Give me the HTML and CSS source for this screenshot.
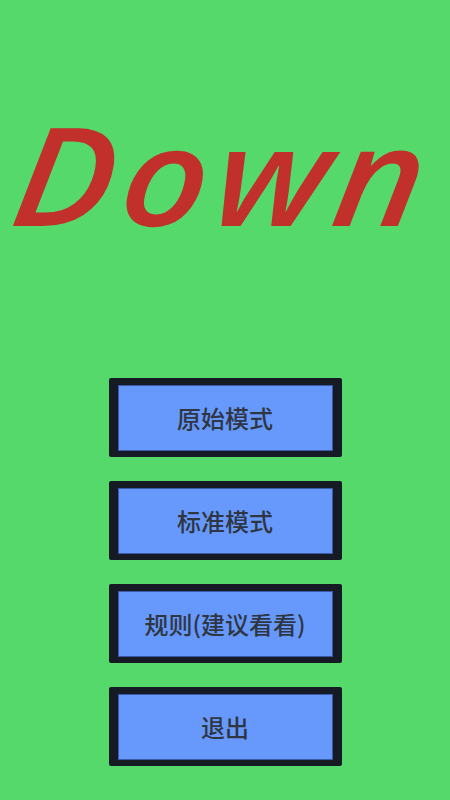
FILE: index.html
```html
<!DOCTYPE html>
<html>
<head>
<meta charset="utf-8">
<link rel="stylesheet" href="styles.css">
</head>
<body>
<div class="screen">
  <h1 class="title">Down</h1>
  <div class="menu">
    <div class="btn"><div class="btn-inner">原始模式</div></div>
    <div class="btn"><div class="btn-inner">标准模式</div></div>
    <div class="btn"><div class="btn-inner">规则(建议看看)</div></div>
    <div class="btn"><div class="btn-inner">退出</div></div>
  </div>
</div>
</body>
</html>
```
FILE: styles.css
```css
html, body {
  margin: 0;
  padding: 0;
}
body {
  width: 450px;
  height: 800px;
  background: #55d96b;
  overflow: hidden;
}
.screen {
  display: flex;
  flex-direction: column;
  align-items: center;
}
.title {
  margin: 88px 0 0 0;
  font-family: "Open Sans", sans-serif;
  font-style: italic;
  font-weight: 600;
  font-size: 137px;
  line-height: 170px;
  letter-spacing: 6px;
  color: #c1302b;
  width: fit-content;
  transform: translateX(-1px) scaleX(1.1) skewX(-8deg);
}
.menu {
  margin-top: 120px;
  display: flex;
  flex-direction: column;
  gap: 24px;
}
.btn {
  width: 233px;
  height: 79px;
  box-sizing: border-box;
  background: #151a25;
  padding: 7px 9px 6px 9px;
  border-radius: 2px;
}
.btn-inner {
  height: 100%;
  box-sizing: border-box;
  background: #6699fb;
  border: 1px solid #3a5aa8;
  display: flex;
  align-items: center;
  justify-content: center;
  font-family: "Noto Sans CJK SC", sans-serif;
  font-weight: 500;
  font-size: 24px;
  color: #2f3642;
  padding-bottom: 2px;
}
```
